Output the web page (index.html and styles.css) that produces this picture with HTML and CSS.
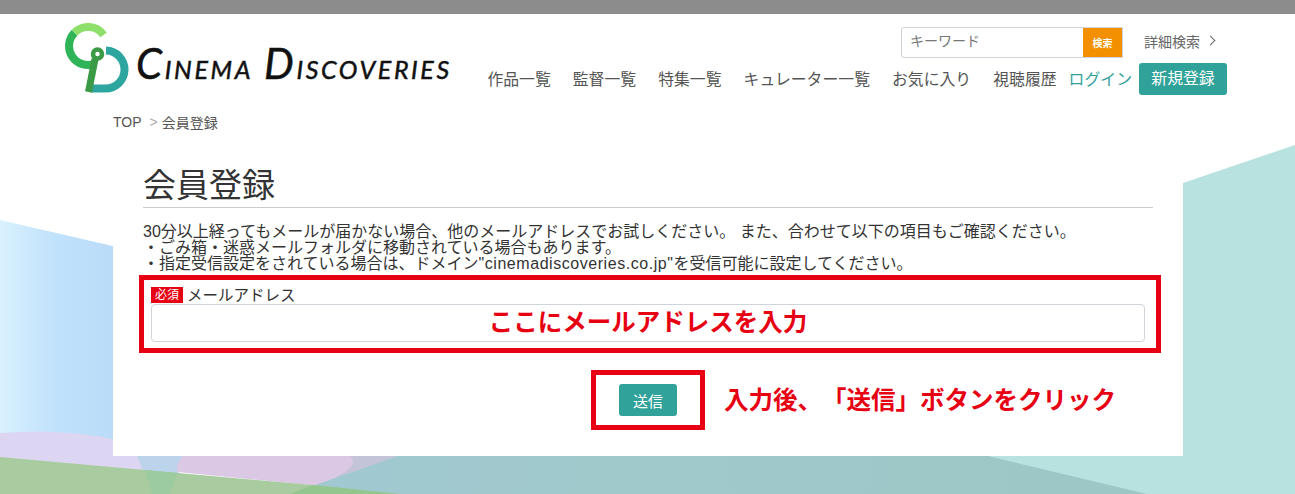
FILE: index.html
```html
<!DOCTYPE html>
<html lang="ja">

<head>
    <meta charset="utf-8" />
    <title>会員登録 | Cinema Discoveries</title>
    <link rel="stylesheet" href="styles.css">
</head>

<body>
    <svg class="backdrop" viewBox="0 0 1295 494" width="1295" height="494" aria-hidden="true">
        <defs>
            <linearGradient id="sky" x1="0" y1="0" x2="1" y2="0">
                <stop offset="0" stop-color="#d8f1fd" />
                <stop offset="0.45" stop-color="#c0e1fb" />
                <stop offset="1" stop-color="#b9daf7" />
            </linearGradient>
            <linearGradient id="sea" x1="0" y1="0" x2="1" y2="0">
                <stop offset="0" stop-color="#a0c8d2" />
                <stop offset="0.35" stop-color="#a0c9cc" />
                <stop offset="1" stop-color="#9bc7c5" />
            </linearGradient>
        </defs>
        <polygon points="0,220 130,250 130,494 0,494" fill="url(#sky)" />
        <path d="M0 433 Q60 428 113 439 L160 456 L160 494 L0 494 Z" fill="#dcd6f2" />
        <polygon points="137,456 183,456 177,480 147,480" fill="#bcd3ec" />
        <polygon points="350,456 400,456 320,490" fill="#c4c4d8" />
        <path d="M183 456 H350 Q358 464 345 472 L320 486 L177 472 Q176 462 183 456 Z" fill="#dac8e4" />
        <polygon points="1183,183 1295,145 1295,494 980,494 980,456 1183,456" fill="#b7e2df" />
        <polygon points="398,456 988,456 1147,494 290,494" fill="url(#sea)" />
        <polygon points="0,457 313,485 400,494 0,494" fill="#a8cc9f" />
        <polygon points="145,470 177,473 170,494 152,494" fill="#9ccb9f" />
        <polygon points="290,494 313,485 400,494" fill="#93c58f" />
    </svg>

    <div class="topbar"></div>

    <header class="site-header">
        <a class="logo" href="#">
            <svg class="logo-mark" viewBox="0 0 64 70" width="64" height="70" aria-hidden="true">
                <!-- C -->
                <path d="M9.6 9.6 A19 19 0 0 0 30 40.7" fill="none" stroke="#2fb457" stroke-width="8" />
                <path d="M9.6 9.6 A19 19 0 0 1 38.5 12" fill="none" stroke="#8ee06a" stroke-width="8" />
                <!-- D -->
                <path d="M41 27.5 A19 19 0 0 1 40 65.5 H26" fill="none" stroke="#2ea6a0" stroke-width="8" />
                <!-- stem -->
                <path d="M23.5 69 L30 36" fill="none" stroke="#3a9a45" stroke-width="7" />
                <circle cx="32.5" cy="31" r="4.5" fill="none" stroke="#3a9a45" stroke-width="4.5" />
            </svg>
            <span class="logo-text"><b>C</b>inema <b>D</b>iscoveries</span>
        </a>

        <div class="header-right">
            <div class="search-row">
                <form class="search">
                    <input class="search-input" placeholder="キーワード">
                    <button class="search-btn" type="button">検索</button>
                </form>
                <a class="search-more" href="#">詳細検索<span class="chev"></span></a>
            </div>
            <nav class="nav">
                <a href="#">作品一覧</a>
                <a href="#">監督一覧</a>
                <a href="#">特集一覧</a>
                <a href="#">キュレーター一覧</a>
                <a href="#">お気に入り</a>
                <a href="#">視聴履歴</a>
                <a class="nav-login" href="#">ログイン</a>
                <a class="nav-signup" href="#">新規登録</a>
            </nav>
        </div>
    </header>

    <main class="card">
        <div class="crumbs">
            <a href="#">TOP</a><span class="crumb-sep">&gt;</span><span>会員登録</span>
        </div>

        <h1 class="title">会員登録</h1>

        <p class="lead">
            30分以上経ってもメールが届かない場合、他のメールアドレスでお試しください。 また、合わせて以下の項目もご確認ください。<br>
            ・ごみ箱・迷惑メールフォルダに移動されている場合もあります。<br>
            ・指定受信設定をされている場合は、ドメイン<span class="domain">"cinemadiscoveries.co.jp"</span>を受信可能に設定してください。
        </p>

        <div class="callout field">
            <label class="field-label"><span class="required">必須</span>メールアドレス</label>
            <div class="field-box">
                <input class="field-input" type="email">
                <div class="field-note">ここにメールアドレスを入力</div>
            </div>
        </div>

        <div class="submit-row">
            <div class="callout submit-box">
                <button class="submit-btn" type="button">送信</button>
            </div>
            <div class="submit-note">入力後、「送信」ボタンをクリック</div>
        </div>
    </main>
</body>

</html>
```

FILE: styles.css
```css
* {
    box-sizing: border-box;
}

html,
body {
    height: 494px;
    overflow: hidden;
}

body {
    margin: 0;
    position: relative;
    background-color: #fff;
    color: #333;
    font-family: "Liberation Sans", "Noto Sans CJK JP", sans-serif;
    text-spacing-trim: space-all;
}

a {
    color: inherit;
    text-decoration: none;
}

.backdrop {
    position: absolute;
    left: 0;
    top: 0;
}

.topbar {
    position: relative;
    height: 14px;
    background-color: #8c8c8c;
}

/* header */
.site-header {
    position: relative;
    display: flex;
    justify-content: space-between;
    height: 90px;
    padding: 8px 68px 0 65px;
}

.logo {
    display: flex;
    align-items: flex-start;
    gap: 7px;
    color: #111;
}

.logo-mark {
    margin-top: 1px;
}

.logo-text {
    margin-top: 21px;
    font-family: "Lato", sans-serif;
    font-style: italic;
    font-size: 36px;
    line-height: 40px;
    font-variant: small-caps;
    letter-spacing: 2.6px;
    white-space: nowrap;
    -webkit-text-stroke: 0.5px #111;
}

.logo-text b {
    font-weight: 400;
    font-size: 42px;
}

.header-right {
    display: flex;
    flex-direction: column;
    align-items: flex-end;
}

.search-row {
    display: flex;
    align-items: center;
    margin-top: 5px;
    padding-right: 13px;
}

.search {
    display: flex;
    width: 222px;
    height: 31px;
    border: 1px solid #ced4da;
    border-radius: 3px 0 0 3px;
    background-color: #fff;
}

.search-input {
    flex: 1;
    min-width: 0;
    border: 0;
    padding: 0 8px;
    margin-bottom: 3px;
    font: inherit;
    font-size: 14px;
    background: transparent;
}

.search-input::placeholder {
    color: #777;
}

.search-btn {
    width: 39px;
    border: 0;
    padding: 0;
    background-color: #f29000;
    color: #fff;
    font: inherit;
    font-size: 10px;
    font-weight: 700;
}

.search-more {
    display: flex;
    align-items: center;
    margin: 0 0 4px 21px;
    color: #666;
    font-size: 14px;
}

.chev {
    width: 7px;
    height: 7px;
    margin-left: 7px;
    border-top: 1px solid #666;
    border-right: 1px solid #666;
    transform: rotate(45deg);
}

.nav {
    display: flex;
    align-items: center;
    margin-top: 5px;
    font-size: 15.85px;
    color: #555;
}

.nav a {
    margin-left: 22px;
    margin-bottom: 2px;
    white-space: nowrap;
}

.nav a.nav-login {
    margin-left: 12px;
    color: #2f9f9a;
}

.nav a.nav-signup {
    margin: 0 0 0 7px;
    width: 88px;
    height: 32px;
    border-radius: 3px;
    background-color: #30a299;
    color: #fff;
    line-height: 32px;
    text-align: center;
}

/* content */
.card {
    position: relative;
    width: 1070px;
    height: 352px;
    margin-left: 113px;
    padding: 8px 30px 0;
    background-color: #fff;
}

.crumbs {
    display: flex;
    align-items: center;
    height: 20px;
    margin-left: -30px;
    color: #555;
    font-size: 14px;
}

.crumb-sep {
    margin: 0 4px 0 8px;
    color: #aaa;
}

.title {
    margin: 25px 0 0;
    height: 51px;
    padding-top: 4px;
    border-bottom: 1px solid #ccc;
    color: #333;
    font-size: 33px;
    font-weight: 400;
    line-height: 50px;
}

.lead {
    margin: 16px 0 0;
    color: #333;
    font-size: 16px;
    line-height: 16px;
    white-space: nowrap;
}

.domain {
    letter-spacing: 0.55px;
}

.callout {
    border: 5px solid #e60012;
}

.field {
    width: 1022px;
    height: 78px;
    margin: 3px 0 0 -4px;
    padding: 7px 11px 0 7px;
}

.field-label {
    display: flex;
    align-items: center;
    height: 17px;
    padding-bottom: 3px;
    color: #333;
    font-size: 15.5px;
}

.required {
    align-self: flex-start;
    width: 32px;
    height: 16px;
    margin-right: 4px;
    background-color: #e60012;
    color: #fff;
    font-size: 12px;
    line-height: 16px;
    text-align: center;
}

.field-box {
    position: relative;
}

.field-input {
    display: block;
    width: 994px;
    height: 38px;
    border: 1px solid #ced4da;
    border-radius: 4px;
    background-color: #fff;
}

.field-note {
    position: absolute;
    left: 0;
    right: 0;
    top: 0;
    height: 38px;
    color: #e60012;
    font-size: 24.5px;
    font-weight: 700;
    line-height: 38px;
    text-align: center;
}

.submit-row {
    display: flex;
    align-items: center;
    margin-top: 17px;
    padding-left: 448px;
}

.submit-box {
    display: flex;
    align-items: center;
    justify-content: center;
    width: 114px;
    height: 60px;
}

.submit-btn {
    width: 58px;
    height: 32px;
    border: 0;
    border-radius: 3px;
    background-color: #30a299;
    color: #fff;
    font: inherit;
    font-size: 15px;
}

.submit-note {
    margin: 0 0 3px 19px;
    color: #e60012;
    font-size: 24.5px;
    font-weight: 700;
    white-space: nowrap;
}
```
